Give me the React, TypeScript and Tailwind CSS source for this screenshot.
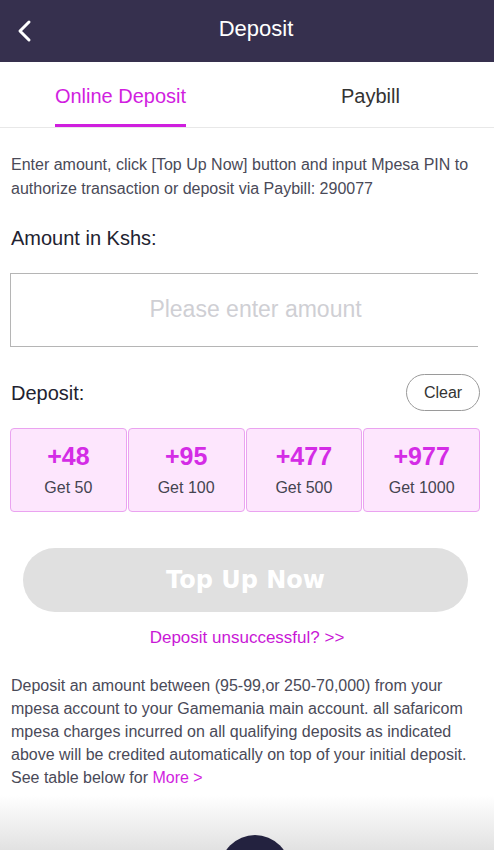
import React from "react";

const cards = [
  { add: "+48", get: "Get 50" },
  { add: "+95", get: "Get 100" },
  { add: "+477", get: "Get 500" },
  { add: "+977", get: "Get 1000" },
];

export default function App() {
  return (
    <div
      className="w-[494px] h-[850px] overflow-hidden bg-white flex flex-col"
      style={{ fontFamily: '"Liberation Sans", Arial, sans-serif' }}
    >
      <div className="h-[62px] bg-[#36304e] flex items-center relative shrink-0">
        <svg className="absolute left-[14px] top-[18px]" width="22" height="26" viewBox="0 0 22 26">
          <path d="M15 4 L6 13 L15 22" fill="none" stroke="#ffffff" strokeWidth="3" strokeLinecap="round" strokeLinejoin="round" />
        </svg>
        <div className="w-full text-center text-white text-[22px] leading-none -mt-[4px] pl-[18px]">Deposit</div>
      </div>

      <div className="h-[66px] flex border-b border-[#e8e8e8] shrink-0">
        <div className="flex-1 flex justify-center">
          <div className="relative h-full flex items-center pt-[2px] text-[20px] text-[#d11ee0] -ml-[6px]">
            Online Deposit
            <div className="absolute left-0 right-0 bottom-0 h-[3px] bg-[#cf1ede]" />
          </div>
        </div>
        <div className="flex-1 flex justify-center items-center pt-[2px] text-[20px] text-[#333333]">Paybill</div>
      </div>

      <div className="px-[11px] pt-[25px] text-[16px] leading-[24px] text-[#4a4a58]">
        Enter amount, click [Top Up Now] button and input Mpesa PIN to authorize transaction or deposit via Paybill: 290077
      </div>

      <div className="px-[11px] mt-[25px] text-[20px] text-[#222230] leading-[24px]">Amount in Kshs:</div>

      <div className="ml-[10px] mr-[16px] mt-[23px] h-[74px] border-l border-t border-b border-[#b5b5b5] flex items-center justify-center pl-[22px]">
        <span className="text-[23px] text-[#cfcfd4] -mt-[2px]">Please enter amount</span>
      </div>

      <div className="flex items-center justify-between pl-[11px] pr-[14px] mt-[27px]">
        <span className="text-[20px] text-[#222230]">Deposit:</span>
        <div className="w-[74px] h-[37px] rounded-full border border-[#9a9a9a] flex items-center justify-center text-[16px] text-[#333]">
          Clear
        </div>
      </div>

      <div className="flex gap-[1px] pl-[10px] pr-[14px] mt-[17px]">
        {cards.map((c) => (
          <div
            key={c.add}
            className="flex-1 h-[84px] rounded-[4px] border border-[#eaa3f0] bg-[#fde6fd] flex flex-col items-center pt-[12px]"
          >
            <span className="text-[25px] font-bold text-[#d42ce6] leading-[30px]">{c.add}</span>
            <span className="text-[16px] text-[#444450] mt-[8px] leading-[18px]">{c.get}</span>
          </div>
        ))}
      </div>

      <div className="ml-[23px] mt-[36px] mr-[26px] h-[64px] rounded-full bg-[#e0e0e0] flex items-center justify-center">
        <span className="text-[24px] text-white" style={{ fontFamily: '"DejaVu Sans", "Liberation Sans", sans-serif', fontWeight: 900 }}>
          Top Up Now
        </span>
      </div>

      <div className="text-center mt-[13px] text-[17px] text-[#c918d6]">Deposit unsuccessful? &gt;&gt;</div>

      <div className="px-[11px] mt-[23px] text-[16px] leading-[23px] text-[#4a4a58]">
        Deposit an amount between (95-99,or 250-70,000) from your mpesa account to your Gamemania main account. all safaricom mpesa charges incurred on all qualifying deposits as indicated above will be credited automatically on top of your initial deposit. See table below for{" "}
        <span className="text-[#d11ee0]">More &gt;</span>
      </div>

      <div className="flex-1 mt-[6px] bg-gradient-to-b from-white to-[#e2e2e2] flex justify-center overflow-hidden">
        <div className="w-[70px] h-[70px] rounded-full bg-[#23223f] mt-[40px] ml-[16px]" />
      </div>
    </div>
  );
}
